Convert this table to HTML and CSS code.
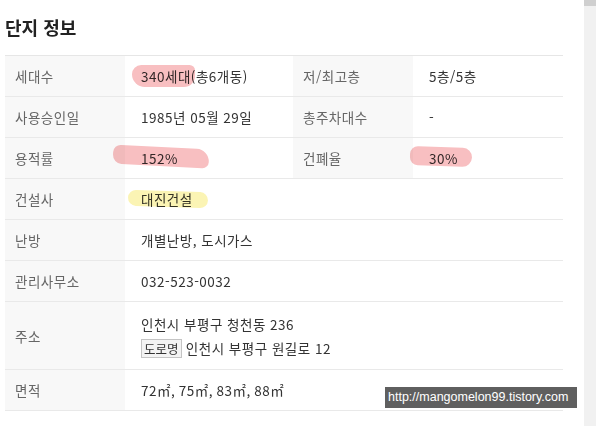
FILE: index.html
```html
<!DOCTYPE html>
<html lang="ko">

<head>
    <meta charset="UTF-8">
    <title>단지 정보</title>
    <link rel="stylesheet" href="styles.css">
</head>

<body>
    <div class="page">
        <div class="content">
            <h2 class="title">단지 정보</h2>
            <table class="info">
                <colgroup>
                    <col class="c-label">
                    <col class="c-val">
                    <col class="c-label">
                    <col class="c-val2">
                </colgroup>
                <tr>
                    <th>세대수</th>
                    <td><span class="mark mark-a">340세대</span>(총6개동)</td>
                    <th>저/최고층</th>
                    <td>5층/5층</td>
                </tr>
                <tr>
                    <th>사용승인일</th>
                    <td>1985년 05월 29일</td>
                    <th>총주차대수</th>
                    <td>-</td>
                </tr>
                <tr>
                    <th>용적률</th>
                    <td><span class="mark mark-b">152%</span></td>
                    <th>건폐율</th>
                    <td><span class="mark mark-c">30%</span></td>
                </tr>
                <tr>
                    <th>건설사</th>
                    <td colspan="3"><span class="mark mark-y">대진건설</span></td>
                </tr>
                <tr>
                    <th>난방</th>
                    <td colspan="3">개별난방, 도시가스</td>
                </tr>
                <tr>
                    <th>관리사무소</th>
                    <td colspan="3">032-523-0032</td>
                </tr>
                <tr class="tall">
                    <th>주소</th>
                    <td colspan="3">
                        <div>인천시 부평구 청천동 236</div>
                        <div class="road"><span class="badge">도로명</span> 인천시 부평구 원길로 12</div>
                    </td>
                </tr>
                <tr>
                    <th>면적</th>
                    <td colspan="3">72㎡, 75㎡, 83㎡, 88㎡</td>
                </tr>
            </table>
        </div>
        <div class="scrollbar"><div class="thumb"></div></div>
        <div class="watermark">http://mangomelon99.tistory.com</div>
    </div>
</body>

</html>
```

FILE: styles.css
```css
* {
    padding: 0;
    margin: 0;
    box-sizing: border-box;
}

body {
    font-family: "Noto Sans CJK KR", "Noto Sans", sans-serif;
    font-size: 13.5px;
    letter-spacing: 0.5px;
    color: #333;
    background: #fff;
}

.page {
    position: relative;
    display: flex;
    height: 426px;
}

.content {
    flex: 1;
    padding: 13px 0 0 5px;
}

.title {
    font-size: 18px;
    font-weight: bold;
    letter-spacing: 0;
    color: #222;
    line-height: 28px;
    height: 42px;
}

.info {
    width: 558px;
    border-collapse: collapse;
    border-top: 1px solid #e6e6e6;
}

.c-label {
    width: 120px;
}

.c-val {
    width: 168px;
}

.info tr {
    height: 41px;
    border-bottom: 1px solid #e9e9e9;
}

.info tr.tall {
    height: 68px;
}

.info th {
    background: #f8f8f8;
    color: #666;
    font-weight: normal;
    text-align: left;
    padding: 0 10px;
}

.info td {
    padding: 0 16px;
    color: #333;
}

.road {
    margin-top: 4px;
}

.badge {
    display: inline-block;
    border: 1px solid #c4c4c4;
    background: #f3f3f3;
    padding: 0 2px;
    line-height: 17px;
    font-size: 12.5px;
    letter-spacing: 0;
}

.mark {
    position: relative;
}

.mark::after {
    content: "";
    position: absolute;
    mix-blend-mode: multiply;
}

.mark-a::after {
    left: -9px;
    top: -1px;
    width: 63px;
    height: 22px;
    background: #f8bfc1;
    border-radius: 10px 6px 12px 14px;
}

.mark-b::after {
    left: -28px;
    top: -1px;
    width: 96px;
    height: 19px;
    background: #f8bfc1;
    border-radius: 12px 20px 10px 14px;
    transform: rotate(3deg);
}

.mark-c::after {
    left: -19px;
    top: -1px;
    width: 62px;
    height: 19px;
    background: #f8bfc1;
    border-radius: 10px 12px 12px 10px;
    transform: rotate(2deg);
}

.mark-y::after {
    left: -13px;
    top: 2px;
    width: 80px;
    height: 16px;
    background: #fbf4b4;
    border-radius: 8px;
    transform: rotate(2deg);
}

.scrollbar {
    width: 12px;
    background: #f1f1f1;
}

.thumb {
    height: 6px;
    background: #cfcfcf;
}

.watermark {
    position: absolute;
    left: 385px;
    top: 387px;
    width: 192px;
    height: 21px;
    line-height: 21px;
    padding-left: 3px;
    background: #5f5f5f;
    color: #fff;
    font-family: "Liberation Sans", Arial, sans-serif;
    font-size: 12.5px;
    letter-spacing: 0;
}
```
